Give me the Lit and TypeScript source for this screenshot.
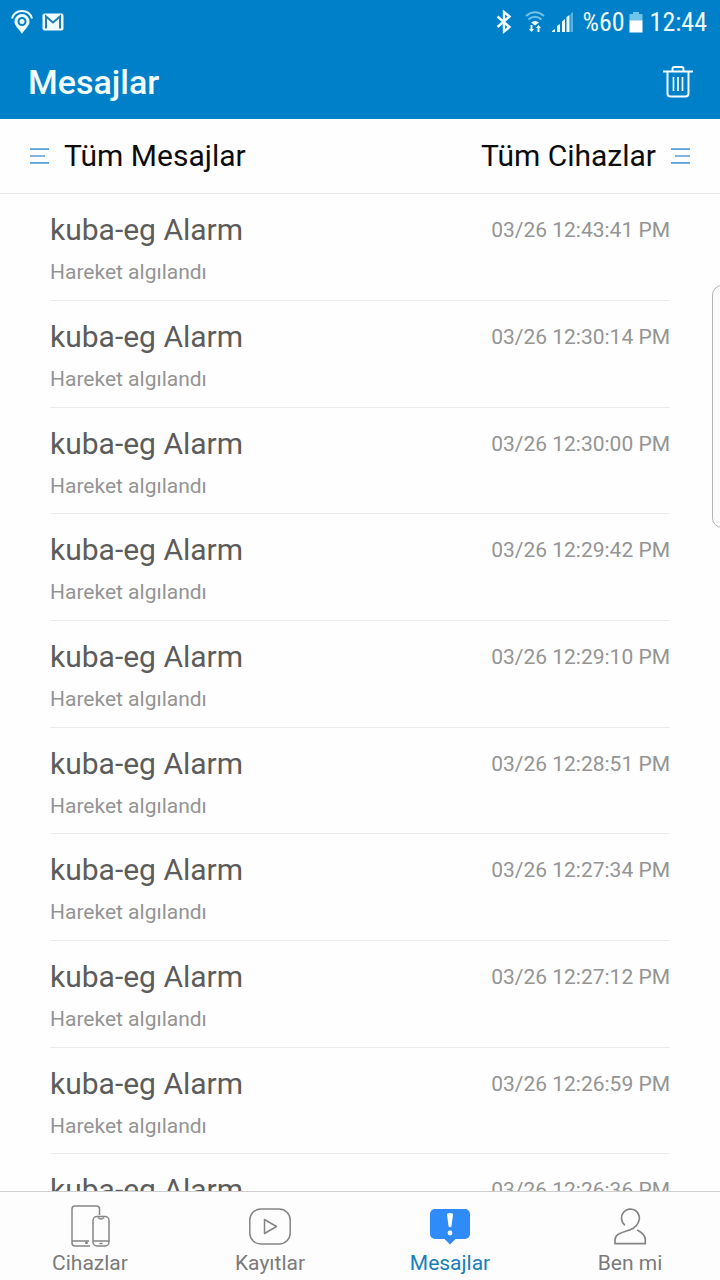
import { LitElement, html, css, svg } from "lit";
import { customElement, property, state } from "lit/decorators.js";
import { classMap } from "lit/directives/class-map.js";

interface Message {
  device: string;
  text: string;
  time: string;
}

const TIMES = [
  "12:43:41", "12:30:14", "12:30:00", "12:29:42", "12:29:10",
  "12:28:51", "12:27:34", "12:27:12", "12:26:59", "12:26:36",
];

const MESSAGES: Message[] = TIMES.map((t) => ({
  device: "kuba-eg Alarm",
  text: "Hareket algılandı",
  time: `03/26 ${t} PM`,
}));

const ICONS = {
  devices: svg`
    <g fill="none" stroke="#858585" stroke-width="1.5">
      <path d="M30.500 11V5a3 3 0 0 0-3-3H6a3 3 0 0 0-3 3V39a3 3 0 0 0 3 3H21"/>
      <path d="M3 37H20M17.500 37.500v2.500M16 39h3"/>
      <rect x="24" y="12.500" width="16" height="29.500" rx="4"/>
      <path d="M24 37h16M29 13.500q3 3 6 0M30.500 39.500h3"/>
    </g>`,
  records: svg`
    <g fill="none" stroke="#858585" stroke-width="1.500">
      <rect x="0.800" y="5" width="40.400" height="35" rx="11"/>
      <path d="M15.500 15.500v14l12-7z" stroke-linejoin="round"/>
    </g>`,
  messages: svg`
    <path fill="#2e8bf7" d="M6 5h30a5 5 0 0 1 5 5v20a5 5 0 0 1-5 5h-9.500L21 40.500l-5.500-5.500H6a5 5 0 0 1-5-5V10a5 5 0 0 1 5-5z"/>
    <path fill="#fff" d="M18 10.500q0-1.500 3-1.500t3 1.500L22.500 22q-.2 1.200-1.500 1.200T19.500 22z"/>
    <circle cx="21" cy="29" r="2.400" fill="#fff"/>`,
  me: svg`
    <path fill="none" stroke="#858585" stroke-width="1.700" stroke-linecap="round" stroke-linejoin="round"
      d="M15.500 20.800A9 9 0 1 1 29.300 18.500C27 24 22 25.500 16 27.500C10 29.500 6 31 6 36V39.700H36.300V35.500Q36.300 30.500 28.700 26.300"/>`,
};

@customElement("status-bar")
export class StatusBar extends LitElement {
  static styles = css`
    :host {
      display: flex;
      align-items: center;
      justify-content: space-between;
      height: 44px;
      padding: 0 13px 0 10px;
      color: #effcff;
      font-family: "Roboto Condensed", "Liberation Sans Narrow", Roboto, sans-serif;
      font-size: 26px;
      line-height: 32px;
    }
    .group {
      display: flex;
      align-items: center;
    }
    .left {
      gap: 8px;
    }
    .icon {
      display: block;
    }
    .wifi {
      margin-left: 12px;
    }
    .signal {
      margin: 0 8px 0 6px;
    }
    .battery {
      margin: 0 7px 0 4px;
    }
  `;

  render() {
    return html`
      <div class="group left">
        <svg class="icon" width="24" height="26" viewBox="0 0 24 26">
          <path d="M2 9.500C5-.5 19-.5 22 9.500" fill="none" stroke="currentColor" stroke-width="2"/>
          <path fill="currentColor" fill-rule="evenodd" d="M12 5a7.500 7.500 0 0 1 7.500 7.500C19.500 17 14.500 20.500 12 25 9.500 20.500 4.500 17 4.500 12.500A7.500 7.500 0 0 1 12 5zm0 3a4.500 4.500 0 1 0 0 9 4.500 4.500 0 0 0 0-9zm0 2a2.500 2.500 0 1 1 0 5 2.500 2.500 0 0 1 0-5z"/>
        </svg>
        <svg class="icon" width="22" height="18" viewBox="0 0 22 18">
          <rect x="0.500" y="0.500" width="21" height="17" rx="2" fill="currentColor"/>
          <path d="M4 15.500V3.500l7 6 7-6v12" fill="none" stroke="#1f7fae" stroke-width="2"/>
        </svg>
      </div>
      <div class="group">
        <svg class="icon" width="16" height="24" viewBox="0 0 16 24">
          <path d="M1.500 6.500l12 10.500L8 21.500V2l5.500 4.500-12 10.500" fill="none" stroke="currentColor" stroke-width="2.400"/>
        </svg>
        <svg class="icon wifi" width="22" height="24" viewBox="0 0 22 24">
          <g fill="none" stroke="#70c3e9" stroke-width="2">
            <path d="M2 6q9-7.500 18 0M4.500 9.500q6.500-5.500 13 0"/>
          </g>
          <path d="M7 12.500q4-3 8 0l-4 3z" fill="currentColor"/>
          <path fill="currentColor" d="M6.500 15h2v4H10l-2.500 3L5 19h1.500zM13.500 22h2v-4H17l-2.500-3L12 18h1.500z"/>
        </svg>
        <svg class="icon signal" width="22" height="22" viewBox="0 0 22 22">
          <path fill="currentColor" d="M0 21v-1l3-2v3zM5 21v-6l3-2v8zM10 21V10.500L13 8v13zM14.500 21V6l3-2v17z"/>
          <path fill="#58b1e0" d="M18.500 21V3L21 1v20z"/>
        </svg>
        <span>%60</span>
        <svg class="icon battery" width="14" height="22" viewBox="0 0 14 22">
          <path fill="#70c3e9" d="M4 1h6v2h3.500v7H.5V3H4z"/>
          <rect x="0.500" y="9.500" width="13" height="12" fill="#fff"/>
        </svg>
        <span>12:44</span>
      </div>
    `;
  }
}

@customElement("message-item")
export class MessageItem extends LitElement {
  @property({ attribute: false }) message!: Message;

  static styles = css`
    :host {
      display: flex;
      justify-content: space-between;
      box-sizing: border-box;
      height: 100%;
      padding-top: 16px;
      border-bottom: 1px solid #ebebeb;
    }
    .name {
      margin: 0;
      font-size: 30px;
      font-weight: 400;
      line-height: 40px;
      color: #5c5c5c;
    }
    .text {
      margin: 6px 0 0;
      font-size: 21px;
      line-height: 32px;
      color: #949494;
    }
    .time {
      font-size: 21px;
      line-height: 40px;
      color: #949494;
    }
  `;

  render() {
    const { device, text, time } = this.message;
    return html`
      <div>
        <h2 class="name">${device}</h2>
        <p class="text">${text}</p>
      </div>
      <time class="time">${time}</time>
    `;
  }
}

@customElement("tab-bar")
export class TabBar extends LitElement {
  @state() private active = "messages";

  private tabs: { id: keyof typeof ICONS; label: string }[] = [
    { id: "devices", label: "Cihazlar" },
    { id: "records", label: "Kayıtlar" },
    { id: "messages", label: "Mesajlar" },
    { id: "me", label: "Ben mi" },
  ];

  static styles = css`
    :host {
      display: block;
      border-top: 1px solid #cfcfcf;
      background: #fdfdfd;
    }
    .tabs {
      display: grid;
      grid-template-columns: repeat(4, 1fr);
    }
    .tab {
      display: flex;
      flex-direction: column;
      align-items: center;
      gap: 1px;
      padding: 12px 0 2px;
      border: 0;
      background: none;
      font: inherit;
      font-size: 21px;
      line-height: 30px;
      color: #7b7b7b;
    }
    .active {
      color: #1580b8;
    }
  `;

  render() {
    return html`
      <nav class="tabs">
        ${this.tabs.map(
          (t) => html`
            <button
              class=${classMap({ tab: true, active: t.id === this.active })}
              @click=${() => (this.active = t.id)}
            >
              <svg width="42" height="43" viewBox="0 0 42 43" aria-hidden="true">${ICONS[t.id]}</svg>
              <span>${t.label}</span>
            </button>
          `,
        )}
      </nav>
    `;
  }
}

@customElement("app-root")
export class AppRoot extends LitElement {
  static styles = css`
    :host {
      position: relative;
      display: flex;
      flex-direction: column;
      height: 100vh;
      overflow: hidden;
      background: #fefefe;
      font-family: Roboto, sans-serif;
    }
    .top {
      flex: none;
      background: #0080c9;
    }
    .header {
      display: flex;
      align-items: center;
      justify-content: space-between;
      height: 75px;
      padding: 0 27px 0 28px;
      color: #f2fdff;
    }
    .title {
      margin: 0;
      font-size: 34px;
      font-weight: 500;
      line-height: 40px;
    }
    .plain {
      display: flex;
      align-items: center;
      gap: 15px;
      padding: 0;
      border: 0;
      background: none;
      color: inherit;
      font: inherit;
    }
    .filters {
      display: flex;
      flex: none;
      align-items: center;
      justify-content: space-between;
      height: 74px;
      padding: 0 29px;
      border-bottom: 1px solid #e8e8e8;
      color: #0c0c0c;
      font-size: 30px;
      line-height: 40px;
    }
    .list {
      flex: 1;
      min-height: 0;
      margin: 0;
      padding: 0 50px;
      overflow-y: auto;
      scrollbar-width: none;
      list-style: none;
    }
    .row {
      height: 107px;
    }
    .row:nth-child(3n) {
      height: 106px;
    }
    .bottom {
      flex: none;
    }
    .edge {
      position: absolute;
      top: 285px;
      right: -12px;
      box-sizing: border-box;
      width: 20px;
      height: 243px;
      border: 1px solid #b4b4b4;
      border-radius: 10px;
      background: #fcfcfc;
    }
  `;

  render() {
    return html`
      <div class="top">
        <status-bar></status-bar>
        <header class="header">
          <h1 class="title">Mesajlar</h1>
          <button class="plain" aria-label="Sil">
            <svg width="30" height="32" viewBox="0 0 30 32" fill="none" stroke="currentColor" stroke-width="2">
              <path d="M0 5.500h30M9.500 5V3a2 2 0 0 1 2-2h7a2 2 0 0 1 2 2v2"/>
              <path d="M4.500 6v21.500a3 3 0 0 0 3 3h15a3 3 0 0 0 3-3V6"/>
              <path d="M10.500 11v14M15 11v14M19.500 11v14" stroke-width="1.700"/>
            </svg>
          </button>
        </header>
      </div>
      <div class="filters">
        <button class="plain">
          <svg width="20" height="16" viewBox="0 0 20 16" fill="none" stroke="#5a9fd6" stroke-width="1.700">
            <path d="M1 1.200h19M1 8h15M1 14.800h19"/>
          </svg>
          <span>Tüm Mesajlar</span>
        </button>
        <button class="plain">
          <span>Tüm Cihazlar</span>
          <svg width="20" height="16" viewBox="0 0 20 16" fill="none" stroke="#5a9fd6" stroke-width="1.700">
            <path d="M0 1.200h19M4 8h15M0 14.800h19"/>
          </svg>
        </button>
      </div>
      <ul class="list">
        ${MESSAGES.map(
          (m) => html`<li class="row"><message-item .message=${m}></message-item></li>`,
        )}
      </ul>
      <tab-bar class="bottom"></tab-bar>
      <div class="edge"></div>
    `;
  }
}
